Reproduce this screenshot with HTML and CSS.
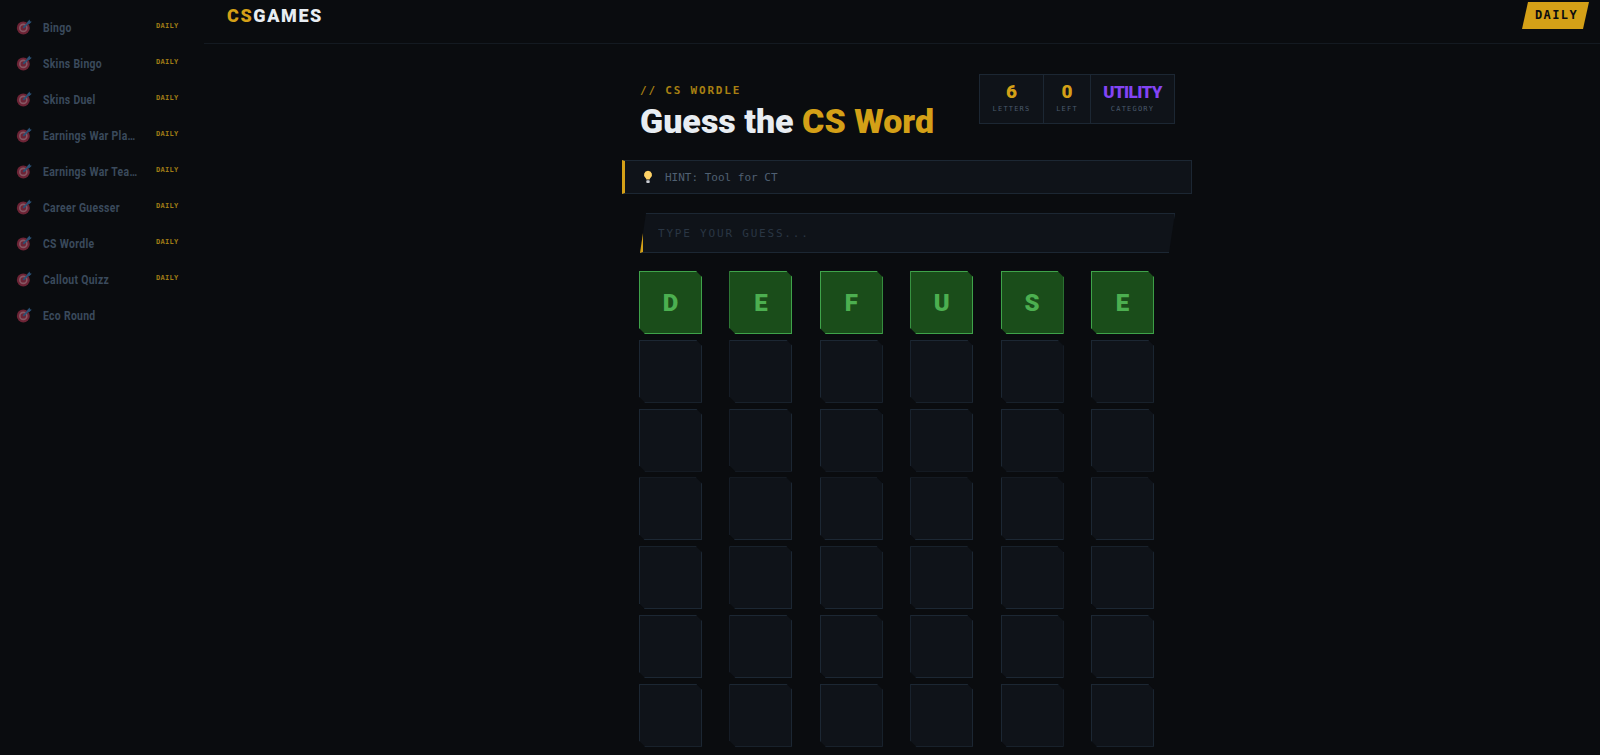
FILE: index.html
```html
<!DOCTYPE html>
<html lang="en">
<head>
  <meta charset="UTF-8" />
  <title>CS Wordle</title>
  <link rel="stylesheet" href="styles.css">
</head>
<body>
  <svg class="defs" width="0" height="0">
    <symbol id="dart" viewBox="0 0 16 16">
      <circle cx="7.300" cy="8.900" r="6.500" fill="#b03450"/>
      <circle cx="7.300" cy="8.900" r="4.300" fill="#d98a9c"/>
      <circle cx="7.300" cy="8.900" r="2.700" fill="#b03450"/>
      <path d="M7.300 8.900 13 3.200" stroke="#3f7fb8" stroke-width="1.800"/>
      <path d="M11.300 3 13.600.6l.4 1.700 1.800.4-2.400 2.300-2-.4z" fill="#3f7fb8"/>
    </symbol>
  </svg>

  <aside class="sidebar">
    <a class="nav-item"><svg class="nav-icon"><use href="#dart"/></svg><span class="nav-label">Bingo</span><span class="nav-tag">DAILY</span></a>
    <a class="nav-item"><svg class="nav-icon"><use href="#dart"/></svg><span class="nav-label">Skins Bingo</span><span class="nav-tag">DAILY</span></a>
    <a class="nav-item"><svg class="nav-icon"><use href="#dart"/></svg><span class="nav-label">Skins Duel</span><span class="nav-tag">DAILY</span></a>
    <a class="nav-item"><svg class="nav-icon"><use href="#dart"/></svg><span class="nav-label">Earnings War Players</span><span class="nav-tag">DAILY</span></a>
    <a class="nav-item"><svg class="nav-icon"><use href="#dart"/></svg><span class="nav-label">Earnings War Teams</span><span class="nav-tag">DAILY</span></a>
    <a class="nav-item"><svg class="nav-icon"><use href="#dart"/></svg><span class="nav-label">Career Guesser</span><span class="nav-tag">DAILY</span></a>
    <a class="nav-item"><svg class="nav-icon"><use href="#dart"/></svg><span class="nav-label">CS Wordle</span><span class="nav-tag">DAILY</span></a>
    <a class="nav-item"><svg class="nav-icon"><use href="#dart"/></svg><span class="nav-label">Callout Quizz</span><span class="nav-tag">DAILY</span></a>
    <a class="nav-item"><svg class="nav-icon"><use href="#dart"/></svg><span class="nav-label">Eco Round</span></a>
  </aside>

  <div class="main">
    <header class="topbar">
      <div class="logo"><span class="gold">CS</span>GAMES</div>
      <div class="mode-badge">DAILY</div>
    </header>

    <section class="game">
      <div class="game-head">
        <div>
          <div class="eyebrow">// CS WORDLE</div>
          <h1 class="title">Guess the <span class="gold">CS Word</span></h1>
        </div>
        <div class="stats">
          <div class="stat stat-letters"><div class="stat-value gold">6</div><div class="stat-label">LETTERS</div></div>
          <div class="stat stat-left"><div class="stat-value gold">0</div><div class="stat-label">LEFT</div></div>
          <div class="stat stat-cat"><div class="stat-value purple">UTILITY</div><div class="stat-label">CATEGORY</div></div>
        </div>
      </div>

      <div class="hint">
        <svg class="hint-icon" viewBox="0 0 10 14">
          <path d="M5 .8a4 4 0 0 0-2.400 7.200c.5.4.7 1 .7 1.600h3.400c0-.6.2-1.200.7-1.600A4 4 0 0 0 5 .8z" fill="#ffd266"/>
          <rect x="3.300" y="10.200" width="3.400" height="2.800" rx=".8" fill="#c9ccd2"/>
        </svg>
        <span>HINT: Tool for CT</span>
      </div>

      <input class="guess" type="text" placeholder="TYPE YOUR GUESS...">

      <div class="board">
        <div class="tile hit">D</div><div class="tile hit">E</div><div class="tile hit">F</div><div class="tile hit">U</div><div class="tile hit">S</div><div class="tile hit">E</div>
        <div class="tile"></div><div class="tile"></div><div class="tile"></div><div class="tile"></div><div class="tile"></div><div class="tile"></div>
        <div class="tile"></div><div class="tile"></div><div class="tile"></div><div class="tile"></div><div class="tile"></div><div class="tile"></div>
        <div class="tile"></div><div class="tile"></div><div class="tile"></div><div class="tile"></div><div class="tile"></div><div class="tile"></div>
        <div class="tile"></div><div class="tile"></div><div class="tile"></div><div class="tile"></div><div class="tile"></div><div class="tile"></div>
        <div class="tile"></div><div class="tile"></div><div class="tile"></div><div class="tile"></div><div class="tile"></div><div class="tile"></div>
        <div class="tile"></div><div class="tile"></div><div class="tile"></div><div class="tile"></div><div class="tile"></div><div class="tile"></div>
      </div>
    </section>
  </div>
</body>
</html>
```

FILE: styles.css
```css
* {
  box-sizing: border-box;
}

html, body {
  height: 100%;
}

body {
  margin: 0;
  display: flex;
  overflow: hidden;
  background-color: #0a0c0f;
  color: #e8edf2;
  font-family: "Roboto", Arial, sans-serif;
}

.defs {
  position: absolute;
}

.gold {
  color: #d4a017;
}

.purple {
  color: #8344f5;
}

/* sidebar */
.sidebar {
  flex: 0 0 204px;
  padding-top: 9px;
}

.nav-item {
  display: flex;
  align-items: center;
  height: 36px;
  padding-left: 16px;
}

.nav-icon {
  width: 16px;
  height: 16px;
  margin-right: 11px;
  opacity: 0.6;
}

/* no condensed face installed, so squeeze the label */
.nav-label {
  width: 120px;
  margin-right: -7px;
  overflow: hidden;
  white-space: nowrap;
  text-overflow: ellipsis;
  transform: scaleX(0.8);
  transform-origin: left center;
  font-size: 13px;
  font-weight: 700;
  letter-spacing: 0.4px;
  color: #3a4a5c;
}

.nav-tag {
  font-family: "DejaVu Sans Mono", monospace;
  font-size: 7px;
  font-weight: 700;
  letter-spacing: 0.300px;
  color: #a07c16;
  margin-top: -3px;
}

/* top bar */
.main {
  flex: 1;
  min-width: 0;
}

.topbar {
  display: flex;
  justify-content: space-between;
  height: 44px;
  padding: 2px 11px 0 23px;
  border-bottom: 1px solid #141a21;
}

.logo {
  font-size: 18px;
  font-weight: 900;
  letter-spacing: 1.600px;
  line-height: 27px;
}

.mode-badge {
  width: 67px;
  height: 27px;
  padding-left: 2px;
  background-color: #d4a017;
  color: #0a0c0f;
  clip-path: polygon(6px 0, 100% 0, calc(100% - 6px) 100%, 0 100%);
  font-family: "DejaVu Sans Mono", monospace;
  font-size: 12px;
  font-weight: 700;
  letter-spacing: 1.400px;
  line-height: 27px;
  text-align: center;
}

/* game */
.game {
  width: 570px;
  margin: 0 auto;
  position: relative;
  left: 5px;
}

.game-head {
  display: flex;
  justify-content: space-between;
  align-items: flex-start;
  padding: 30px 17px 0 18px;
}

.eyebrow {
  margin: 10px 0 3px;
  font-family: "DejaVu Sans Mono", monospace;
  font-size: 11px;
  font-weight: 700;
  letter-spacing: 1.800px;
  line-height: 13px;
  color: #a88012;
}

.title {
  margin: 0;
  font-size: 34px;
  font-weight: 900;
  line-height: 42px;
  white-space: nowrap;
}

.stats {
  display: flex;
  height: 50px;
  background-color: #0f1319;
  border: 1px solid #1c2733;
}

.stat {
  display: flex;
  flex-direction: column;
  align-items: center;
  padding-top: 7px;
  border-right: 1px solid #1c2733;
}

.stat:last-child {
  border-right: none;
}

.stat-letters {
  width: 64px;
}

.stat-left {
  width: 47px;
}

.stat-cat {
  width: 83px;
}

.stat-value {
  font-size: 19px;
  font-weight: 900;
  line-height: 20px;
}

.stat-cat .stat-value {
  font-size: 17px;
  letter-spacing: -0.600px;
}

.stat-label {
  margin-top: 3px;
  font-family: "DejaVu Sans Mono", monospace;
  font-size: 7px;
  letter-spacing: 1.200px;
  color: #4a5a6c;
}

.hint {
  display: flex;
  align-items: center;
  height: 34px;
  margin-top: 18px;
  padding-left: 18px;
  background-color: #0f1319;
  border: 1px solid #1c2733;
  border-left: 3px solid #d4a017;
  font-family: "DejaVu Sans Mono", monospace;
  font-size: 11px;
  color: #4f6072;
}

.hint-icon {
  width: 10px;
  height: 14px;
  margin-right: 12px;
}

.guess {
  display: block;
  width: 535px;
  height: 40px;
  margin: 19px 0 18px 18px;
  padding: 0 0 0 15px;
  background-color: #0f1319;
  border: 1px solid #1c2733;
  border-left: 3px solid #d4a017;
  outline: none;
  clip-path: polygon(6px 0, 100% 0, calc(100% - 6px) 100%, 0 100%);
  font-family: "DejaVu Sans Mono", monospace;
  font-size: 11px;
  letter-spacing: 1.800px;
  color: #e8edf2;
}

.guess::placeholder {
  color: #2a3644;
  opacity: 1;
}

.board {
  display: grid;
  grid-template-columns: repeat(6, 63px);
  grid-auto-rows: 63px;
  column-gap: 27.400px;
  row-gap: 5.800px;
  margin-left: 17px;
}

.tile {
  display: flex;
  align-items: center;
  justify-content: center;
  background-color: #0f1319;
  border: 1.500px solid #1c2733;
  clip-path: polygon(0 0, calc(100% - 6px) 0, 100% 6px, 100% 100%, 6px 100%, 0 calc(100% - 6px));
  font-size: 24px;
  font-weight: 900;
}

.tile.hit {
  background-color: #1a4d1a;
  border-color: #3fa34a;
  color: #4caf50;
}
```
